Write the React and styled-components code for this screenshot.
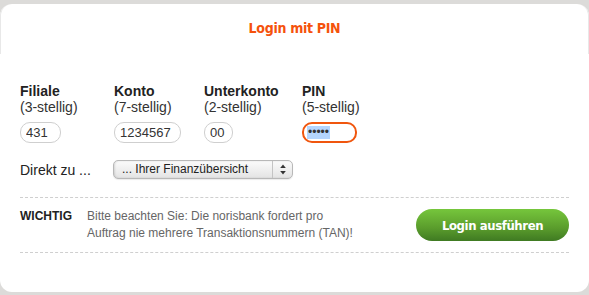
import styled, { createGlobalStyle } from 'styled-components';

const GlobalStyle = createGlobalStyle`
  html, body {
    margin: 0;
    padding: 0;
    background: #dcdbd9;
  }
  body {
    font-family: "Liberation Sans", Arial, sans-serif;
  }
`;

const fields = [
  { name: 'Filiale', hint: '(3-stellig)', value: '431', width: 41 },
  { name: 'Konto', hint: '(7-stellig)', value: '1234567', width: 67 },
  { name: 'Unterkonto', hint: '(2-stellig)', value: '00', width: 29 },
];

export default function App() {
  return (
    <>
      <GlobalStyle />
      <Page>
        <Card>
          <Header>
            <Title>Login mit PIN</Title>
          </Header>

          <Form>
            <FieldGrid>
              {fields.map(f => (
                <Field key={f.name}>
                  <Label>{f.name}</Label>
                  <Hint>{f.hint}</Hint>
                  <TextInput type="text" defaultValue={f.value} $width={f.width} />
                </Field>
              ))}
              <Field>
                <Label>PIN</Label>
                <Hint>(5-stellig)</Hint>
                <PinBox>
                  <Selected>•••••</Selected>
                </PinBox>
              </Field>
            </FieldGrid>

            <DirectRow>
              <DirectLabel>Direkt zu ...</DirectLabel>
              <SelectBox>
                <SelectValue>... Ihrer Finanzübersicht</SelectValue>
                <SelectArrows>
                  <svg width="6" height="11" viewBox="0 0 6 11">
                    <path d="M3 0.5 L5.8 4 L0.2 4 Z" fill="#333" />
                    <path d="M3 10.5 L5.8 7 L0.2 7 Z" fill="#333" />
                  </svg>
                </SelectArrows>
              </SelectBox>
            </DirectRow>

            <Notice>
              <NoticeTag>WICHTIG</NoticeTag>
              <NoticeText>
                Bitte beachten Sie: Die norisbank fordert pro Auftrag nie mehrere Transaktionsnummern (TAN)!
              </NoticeText>
              <SubmitButton type="button">Login ausführen</SubmitButton>
            </Notice>
          </Form>
        </Card>
      </Page>
    </>
  );
}

//============= Styled Components =============
const Page = styled.div`
  width: 589px;
  height: 295px;
  padding: 4px 0 3px 0;
  box-sizing: border-box;
`;

const Card = styled.div`
  height: 288px;
  background: #fff;
  border-radius: 12px;
`;

const Header = styled.div`
  height: 50px;
  display: flex;
  align-items: center;
  justify-content: center;
  border-left: 1px solid #e8e8e8;
  border-right: 1px solid #e8e8e8;
  border-radius: 12px 12px 0 0;
`;

const condensed = `
  font-family: "DejaVu Sans Condensed", "DejaVu Sans", sans-serif;
  font-stretch: condensed;
  font-weight: bold;
`;

const Title = styled.h1`
  ${condensed}
  margin: 0 0 2px;
  font-size: 14px;
  letter-spacing: -0.3px;
  color: #f5520c;
`;

const Form = styled.div`
  padding: 29px 20px 0 20px;
`;

const FieldGrid = styled.div`
  display: grid;
  grid-template-columns: 94px 90px 98px auto;
`;

const Field = styled.div`
  display: flex;
  flex-direction: column;
  align-items: flex-start;
`;

const Label = styled.span`
  font-size: 14px;
  line-height: 16px;
  font-weight: bold;
  color: #222;
`;

const Hint = styled.span`
  font-size: 14px;
  line-height: 16px;
  color: #333;
`;

const TextInput = styled.input`
  margin: 7px 0 0 0;
  width: ${p => p.$width}px;
  height: 21px;
  box-sizing: border-box;
  border: 1px solid #cfcfcf;
  border-radius: 10px;
  padding: 0 0 0 5px;
  font-family: "Liberation Sans", Arial, sans-serif;
  font-size: 13px;
  color: #333;
  outline: none;
  background: #fff;
`;

const PinBox = styled.div`
  margin-top: 7px;
  width: 55px;
  height: 21px;
  box-sizing: border-box;
  border: 2px solid #f0560e;
  border-radius: 10px;
  padding: 0 0 0 3px;
  display: flex;
  align-items: center;
`;

const Selected = styled.span`
  background: #b4d5fe;
  font-size: 12px;
  line-height: 13px;
  color: #333;
  padding: 0 1px;
`;

const DirectRow = styled.div`
  display: flex;
  align-items: center;
  margin-top: 17px;
`;

const DirectLabel = styled.span`
  width: 93px;
  font-size: 14px;
  color: #222;
`;

const SelectBox = styled.div`
  width: 180px;
  height: 19px;
  box-sizing: border-box;
  display: flex;
  border: 1px solid #b8b8b8;
  border-radius: 5px;
  background: linear-gradient(#fbfbfb, #e4e4e4);
  box-shadow: inset 1px 0 2px rgba(0, 0, 0, 0.12), 0 1px 1px rgba(0, 0, 0, 0.08);
`;

const SelectValue = styled.span`
  flex: 1;
  font-size: 12px;
  line-height: 17px;
  color: #222;
  padding-left: 8px;
`;

const SelectArrows = styled.span`
  width: 19px;
  border-left: 1px solid #c4c4c4;
  display: flex;
  align-items: center;
  justify-content: center;
`;

const Notice = styled.div`
  margin-top: 18px;
  display: flex;
  align-items: flex-start;
  padding: 10px 0 10px;
  border-top: 1px dashed #cfcfcf;
  border-bottom: 1px dashed #cfcfcf;
`;

const NoticeTag = styled.span`
  width: 67px;
  font-size: 12px;
  line-height: 17px;
  font-weight: bold;
  color: #222;
`;

const NoticeText = styled.p`
  margin: 0;
  width: 270px;
  font-size: 12px;
  line-height: 17px;
  color: #666;
`;

const SubmitButton = styled.button`
  ${condensed}
  margin: 1px 0 0 auto;
  width: 153px;
  height: 32px;
  border: none;
  border-radius: 16px;
  font-size: 13px;
  letter-spacing: -0.4px;
  color: #fff;
  background: linear-gradient(#76c63c, #5a9c2c 60%, #3f7a22);
  cursor: pointer;
`;
